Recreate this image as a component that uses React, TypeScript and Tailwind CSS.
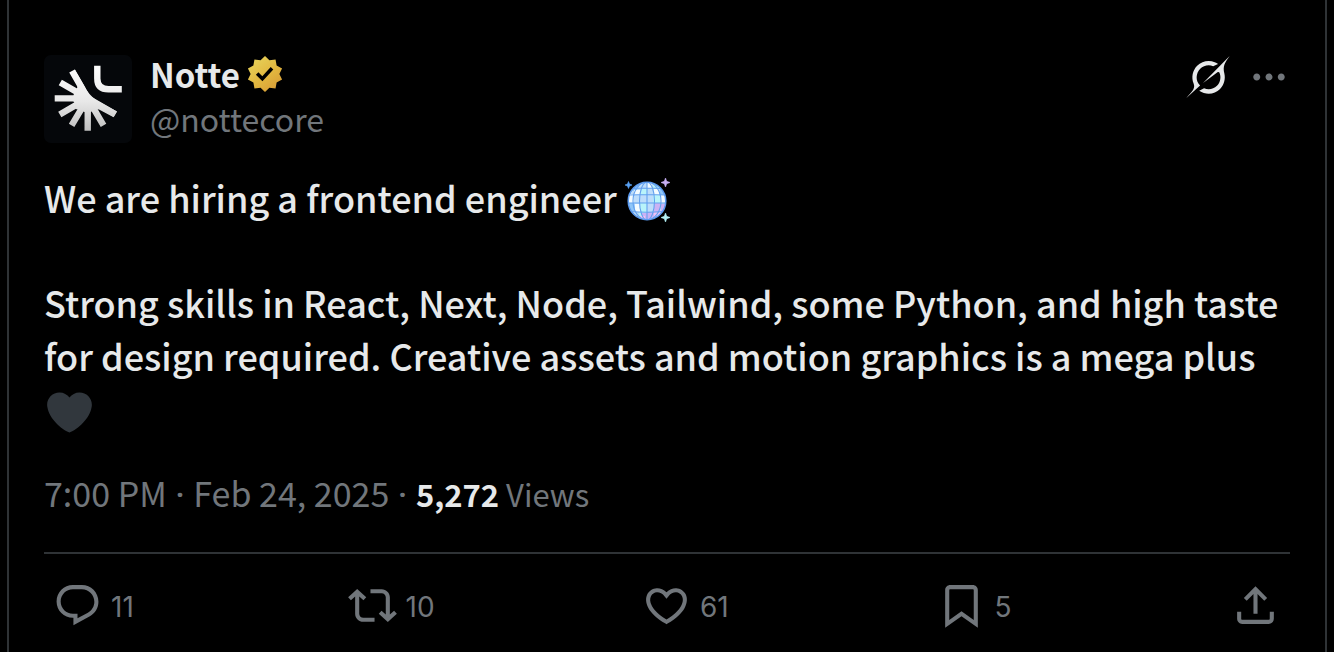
import type { ReactNode } from "react";

function Avatar() {
  return (
    <svg viewBox="0 0 88 88" className="size-22 shrink-0" role="img" aria-label="Notte">
      <defs>
        <linearGradient id="silver" x1="0" y1="8" x2="0" y2="78" gradientUnits="userSpaceOnUse">
          <stop offset="0" stopColor="#ffffff" />
          <stop offset="0.55" stopColor="#e8e8e8" />
          <stop offset="1" stopColor="#bcbcbc" />
        </linearGradient>
      </defs>
      <rect width="88" height="88" rx="7" fill="#05070a" />
      <g stroke="url(#silver)" strokeWidth="6.4" fill="none">
        <path d="M28 16 43.7 43.3M16.3 27.5 43.7 43.3M10.7 43.4 43.7 43.2M15.8 59.5 43.7 43.3M27.6 70.3 43.7 43.3M43.7 75.8 43.8 43.3M59.5 70.3 43.7 43.3M71.3 59.3 43.7 43.3" />
        <path d="M53.3 10.8V23.5Q53.3 34.3 64.5 34.3H77.8" />
      </g>
      <path
        d="M30.8 14.3 40.5 31Q44 39 52 45L73 56.6 69.6 62.2 55 54.5 50.5 54 47 57 40.5 57 36.5 55 31.5 54 32 50 29.5 46.5 29.5 40 31.5 36 33.5 32Z"
        fill="url(#silver)"
      />
    </svg>
  );
}

function VerifiedBadge() {
  return (
    <svg viewBox="0 0 22 22" className="size-10.5" role="img" aria-label="Verified organization">
      <defs>
        <linearGradient id="gold" x1="4" y1="2" x2="18" y2="20" gradientUnits="userSpaceOnUse">
          <stop offset="0" stopColor="#f4e72a" />
          <stop offset="0.1" stopColor="#e6cf57" />
          <stop offset="0.55" stopColor="#e2b73f" />
          <stop offset="1" stopColor="#d79a35" />
        </linearGradient>
      </defs>
      <path
        fill="url(#gold)"
        d="M13.324 3.848L11 1.6 8.676 3.848l-3.201-.453-.559 3.184L2.06 8.095 3.48 11l-1.42 2.904 2.856 1.516.559 3.184 3.201-.452L11 20.4l2.324-2.248 3.201.452.559-3.184 2.856-1.516L18.52 11l1.42-2.905-2.856-1.516-.559-3.184z"
      />
      <path fill="#000" d="M6.234 11.423l3.428 3.428 5.683-6.206-1.347-1.247-4.4 4.795-2.072-2.072z" />
    </svg>
  );
}

function DiscoBall() {
  return (
    <svg viewBox="0 0 46 46" className="inline-block size-[46px] align-[-11px]" role="img" aria-label="Mirror ball">
      <defs>
        <clipPath id="ball">
          <circle cx="22" cy="23" r="18.5" />
        </clipPath>
      </defs>
      <g clipPath="url(#ball)">
        <rect width="46" height="46" fill="#bdddfb" />
        <path fill="#8fc6f8" d="M3 4h14l-6 9H3zM35 4h8v13h-8zM3 25h6l2 8H3z" />
        <path fill="#b8f4fa" d="M16 11h6v6h-6zM28 17h7v8h-7zM15 25h7v9h-7zM28 4h7v6h-7zM14 34h8v6h-8z" />
        <path fill="#f3fbff" d="M4 16h5v9H4zM9 12h6v5H9zM29 11h5v6h-5zM35 17h5v8h-5zM10 26h5v8h-5zM22 5h5v5h-5z" />
        <path fill="#cbb2f4" d="M29 25h6v9h-6zM17 35h5v6h-5zM22 34h7v7h-7zM36 26h5v8h-5z" />
        <path fill="#efc3f4" d="M29 34h9v6h-9zM15 38h5v4h-5z" />
        <g fill="none" stroke="#63a1ee" strokeWidth="1.1">
          <path d="M22 3v40M3 25h38M7 10.5Q22 9.5 37 10.5M4 17Q22 16 40 17M5 33.5Q22 35 39 33.5" />
          <ellipse cx="22" cy="23" rx="7.5" ry="19" />
          <ellipse cx="22" cy="23" rx="14" ry="19" />
        </g>
      </g>
      <circle cx="22" cy="23" r="18.8" fill="none" stroke="#5c9bf0" strokeWidth="1.5" />
      <path fill="#5aa2f5" stroke="#5aa2f5" strokeWidth="0.6" d="M3.5 3.5l1 2.5 2.5 1-2.5 1-1 2.5-1-2.5-2.5-1 2.5-1z" />
      <path fill="#c8b0f5" stroke="#c8b0f5" strokeWidth="0.6" d="M40.5 0l1.2 3.3 3.3 1.2-3.3 1.2-1.2 3.3-1.2-3.3-3.3-1.2 3.3-1.2z" />
      <path fill="#b5f2f6" stroke="#b5f2f6" strokeWidth="0.6" d="M40.5 35l1.2 3.3 3.3 1.2-3.3 1.2-1.2 3.3-1.2-3.3-3.3-1.2 3.3-1.2z" />
    </svg>
  );
}

function BlackHeart() {
  return (
    <svg viewBox="0 0 36 36" className="ml-[3px] inline-block size-[45px] align-[-11px]" role="img" aria-label="Black heart">
      <path
        fill="#31373d"
        d="M35.885 11.833c0-5.45-4.418-9.868-9.867-9.868-3.308 0-6.227 1.633-8.018 4.129-1.791-2.496-4.71-4.129-8.017-4.129-5.45 0-9.868 4.417-9.868 9.868 0 .772.098 1.52.266 2.241C1.751 22.587 11.216 31.568 18 34.034c6.783-2.466 16.249-11.447 17.617-19.959.17-.721.268-1.469.268-2.242z"
      />
    </svg>
  );
}

const icons = {
  reply:
    "M1.751 10c0-4.42 3.584-8 8.005-8h4.366c4.49 0 8.129 3.64 8.129 8.13 0 2.96-1.607 5.68-4.196 7.11l-8.054 4.46v-3.69h-.067c-4.49.1-8.183-3.51-8.183-8.01zm8.005-6c-3.317 0-6.005 2.69-6.005 6 0 3.37 2.77 6.08 6.138 6.01l.351-.01h1.761v2.3l5.087-2.81c1.951-1.08 3.163-3.13 3.163-5.36 0-3.39-2.744-6.13-6.129-6.13H9.756z",
  repost:
    "M4.5 3.88l4.432 4.14-1.364 1.46L5.5 7.55V16c0 1.1.896 2 2 2H13v2H7.5c-2.209 0-4-1.79-4-4V7.55L1.432 9.48.068 8.02 4.5 3.88zM16.5 6H11V4h5.5c2.209 0 4 1.79 4 4v8.45l2.068-1.93 1.364 1.46-4.432 4.14-4.432-4.14 1.364-1.46 2.068 1.93V8c0-1.1-.896-2-2-2z",
  like: "M16.697 5.5c-1.222-.06-2.679.51-3.89 2.16l-.805 1.09-.806-1.09C9.984 6.01 8.526 5.44 7.304 5.5c-1.243.07-2.349.78-2.91 1.91-.552 1.12-.633 2.78.479 4.82 1.074 1.97 3.257 4.27 7.129 6.61 3.87-2.34 6.052-4.64 7.126-6.61 1.111-2.04 1.03-3.7.477-4.82-.561-1.13-1.666-1.84-2.908-1.91zm4.187 7.69c-1.351 2.48-4.001 5.12-8.379 7.67l-.503.3-.504-.3c-4.379-2.55-7.029-5.19-8.382-7.67-1.36-2.5-1.41-4.86-.514-6.67.887-1.79 2.647-2.91 4.601-3.01 1.651-.09 3.368.56 4.798 2.01 1.429-1.45 3.146-2.1 4.796-2.01 1.954.1 3.714 1.22 4.601 3.01.896 1.81.846 4.17-.514 6.67z",
  bookmark:
    "M4 4.5C4 3.12 5.119 2 6.5 2h11C18.881 2 20 3.12 20 4.5v18.44l-8-5.71-8 5.71V4.5zM6.5 4c-.276 0-.5.22-.5.5v14.56l6-4.29 6 4.29V4.5c0-.28-.224-.5-.5-.5h-11z",
  share:
    "M12 2.59l5.7 5.7-1.41 1.42L13 6.41V16h-2V6.41l-3.3 3.3-1.41-1.42L12 2.59zM21 15l-.02 3.51c0 1.38-1.12 2.49-2.5 2.49H5.5C4.11 21 3 19.88 3 18.5V15h2v3.5c0 .28.22.5.5.5h12.98c.28 0 .5-.22.5-.5L19 15h2z",
  more: "M3 12c0-1.1.9-2 2-2s2 .9 2 2-.9 2-2 2-2-.9-2-2zm9 2c1.1 0 2-.9 2-2s-.9-2-2-2-2 .9-2 2 .9 2 2 2zm7 0c1.1 0 2-.9 2-2s-.9-2-2-2-2 .9-2 2 .9 2 2 2z",
};

function Icon({ d, className }: { d: string; className: string }) {
  return (
    <svg viewBox="0 0 24 24" className={className} fill="currentColor" aria-hidden="true">
      <path d={d} />
    </svg>
  );
}

function Action({ label, icon, count }: { label: string; icon: string; count: number }) {
  return (
    <div className="flex flex-1">
      <button type="button" aria-label={`${count} ${label}`} className="flex items-center gap-[9px]">
        <Icon d={icon} className="size-[49px]" />
        <span className="pt-1 font-['Inter',sans-serif] text-[28px] leading-[45px]">{count}</span>
      </button>
    </div>
  );
}

function Dot(): ReactNode {
  return <span className="font-['Roboto',sans-serif] font-medium"> · </span>;
}

export default function App() {
  return (
    <div className="min-h-screen bg-black px-[7px] font-['Noto_Sans_CJK_SC','Noto_Sans',sans-serif] text-[#71767b]">
      <article className="min-h-screen border-x-2 border-[#2f3336] px-[35px] pt-[55px]">
        <header className="flex items-start gap-[18px]">
          <Avatar />
          <div className="-mt-[3px] flex-1">
            <div className="flex h-11 items-center gap-1">
              <a href="#notte" className="text-[33px] leading-11 font-bold text-[#e7e9ea]">
                Notte
              </a>
              <VerifiedBadge />
            </div>
            <a href="#notte" className="block text-[32px] leading-11">
              @nottecore
            </a>
          </div>
          <div className="flex h-11 items-center gap-[18px]">
            <button type="button" aria-label="Explain this post" className="text-[#e7e9ea]">
              <svg viewBox="0 0 33 32" className="h-[42px] w-11" fill="currentColor" aria-hidden="true">
                <path d="M12.745 20.54l10.97-8.19c.539-.4 1.307-.244 1.564.38 1.349 3.288.746 7.241-1.938 9.955-2.683 2.714-6.417 3.31-9.83 1.954l-3.728 1.745c5.347 3.697 11.84 2.782 15.898-1.324 3.219-3.255 4.216-7.692 3.284-11.693l.008.009c-1.351-5.878.332-8.227 3.782-13.031L33 0l-4.54 4.59v-.014L12.743 20.544m-2.263 1.987c-3.837-3.707-3.175-9.446.1-12.755 2.42-2.449 6.388-3.448 9.852-1.979l3.72-1.737c-.67-.49-1.53-1.017-2.515-1.387-4.455-1.854-9.789-.931-13.41 2.728-3.483 3.523-4.579 8.94-2.697 13.561 1.405 3.454-.899 5.898-3.22 8.364C1.49 30.2.666 31.074 0 32l10.478-9.466" />
              </svg>
            </button>
            <button type="button" aria-label="More">
              <Icon d={icons.more} className="size-[42px]" />
            </button>
          </div>
        </header>

        <div className="mt-7 space-y-[52px] text-[36px] leading-[53px] font-medium text-[#e7e9ea]">
          <p>
            We are hiring a frontend engineer <DiscoBall />
          </p>
          <p>
            Strong skills in React, Next, Node, Tailwind, some Python, and high taste for design required. Creative
            assets and motion graphics is a mega plus <BlackHeart />
          </p>
        </div>

        <p className="mt-9 text-[34px] leading-11">
          <time dateTime="2025-02-24T19:00">
            7:00 PM
            <Dot />
            Feb 24, 2025
          </time>
          <Dot />
          <span className="text-[31px]">
            <strong className="font-bold text-[#e7e9ea]">5,272</strong> Views
          </span>
        </p>

        <footer className="mt-[35px] flex border-t-2 border-[#2f3336] pt-[27px] pr-[10px] pl-[9px]">
          <Action label="replies" icon={icons.reply} count={11} />
          <Action label="reposts" icon={icons.repost} count={10} />
          <Action label="likes" icon={icons.like} count={61} />
          <Action label="bookmarks" icon={icons.bookmark} count={5} />
          <button type="button" aria-label="Share post">
            <Icon d={icons.share} className="size-[49px]" />
          </button>
        </footer>
      </article>
    </div>
  );
}
